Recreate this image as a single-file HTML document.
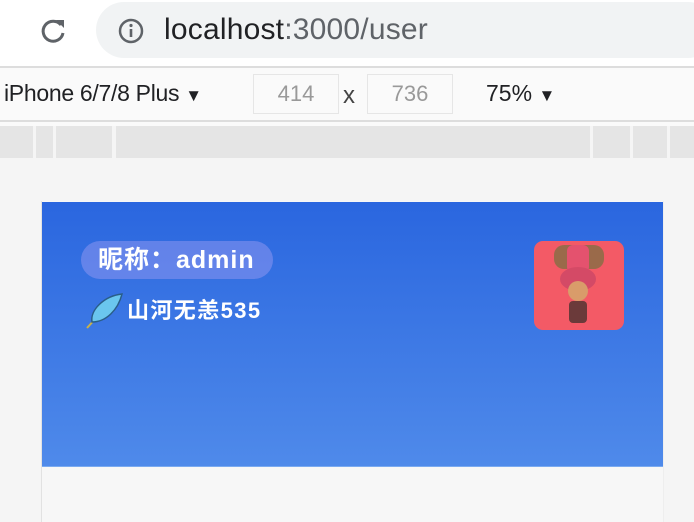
<!DOCTYPE html>
<html><head><meta charset="utf-8"><style>
*{margin:0;padding:0;box-sizing:border-box}
body{width:694px;height:522px;overflow:hidden;background:#f5f5f5;font-family:"Liberation Sans","Noto Sans CJK SC",sans-serif;position:relative}
.abs{position:absolute}
</style></head><body>
<div class="abs" style="left:0;top:0;width:694px;height:66px;background:#fff"></div>
<svg class="abs" style="left:36px;top:14px" width="34" height="34" viewBox="0 0 34 34"><path d="M25 11 A10 10 0 1 0 27 19" fill="none" stroke="#5f6368" stroke-width="3"/><path d="M20 6 L28 6 L28 14 Z" fill="#5f6368"/></svg>
<div class="abs" style="left:96px;top:2px;width:620px;height:56px;background:#f1f3f4;border-radius:28px"></div>
<svg class="abs" style="left:117px;top:17px" width="28" height="28" viewBox="0 0 28 28"><circle cx="14" cy="14" r="11" fill="none" stroke="#5f6368" stroke-width="2.5"/><rect x="12.7" y="12" width="2.6" height="8" fill="#5f6368"/><circle cx="14" cy="8.5" r="1.6" fill="#5f6368"/></svg>
<div class="abs" style="left:164px;top:12px;font-size:30px;letter-spacing:0.2px;color:#202124;line-height:36px">localhost<span style="color:#5f6368">:3000/user</span></div>
<div class="abs" style="left:0;top:66px;width:694px;height:2px;background:#ddd"></div>
<div class="abs" style="left:0;top:68px;width:694px;height:52px;background:#fafafa"></div>
<div class="abs" style="left:4px;top:80px;font-size:23px;letter-spacing:-0.3px;color:#202124">iPhone 6/7/8 Plus <span style="font-size:17px">▼</span></div>
<div class="abs" style="left:253px;top:74px;width:86px;height:40px;border:1px solid #e6e6e6;background:#fafafa;font-size:22px;color:#999;text-align:center;line-height:38px">414</div>
<div class="abs" style="left:343px;top:82px;font-size:24px;color:#444">x</div>
<div class="abs" style="left:367px;top:74px;width:86px;height:40px;border:1px solid #e6e6e6;background:#fafafa;font-size:22px;color:#999;text-align:center;line-height:38px">736</div>
<div class="abs" style="left:486px;top:80px;font-size:23px;color:#202124">75% <span style="font-size:17px">▼</span></div>
<div class="abs" style="left:0;top:120px;width:694px;height:2px;background:#ddd"></div>
<div class="abs" style="left:0;top:122px;width:694px;height:4px;background:#fafafa"></div>
<div class="abs" style="left:0;top:126px;width:694px;height:32px;background:#e5e5e5"></div>
<div class="abs" style="left:33px;top:126px;width:3px;height:32px;background:#f5f5f5"></div>
<div class="abs" style="left:53px;top:126px;width:3px;height:32px;background:#f5f5f5"></div>
<div class="abs" style="left:112px;top:126px;width:4px;height:32px;background:#f5f5f5"></div>
<div class="abs" style="left:590px;top:126px;width:3px;height:32px;background:#f5f5f5"></div>
<div class="abs" style="left:630px;top:126px;width:3px;height:32px;background:#f5f5f5"></div>
<div class="abs" style="left:667px;top:126px;width:3px;height:32px;background:#f5f5f5"></div>
<div class="abs" style="left:41px;top:201px;width:623px;height:321px;background:#f7f7f7;border-left:1px solid #e2e2e2;border-right:1px solid #eee"></div>
<div class="abs" style="left:42px;top:202px;width:621px;height:265px;background:linear-gradient(#2a66df,#4f8aea);border-bottom:1px solid #7aaaf0"></div>
<div class="abs" style="left:81px;top:241px;width:192px;height:38px;border-radius:19px;background:rgba(140,150,240,.55)"></div>
<div class="abs" style="left:98px;top:244px;font-size:25px;font-weight:bold;color:#fff;line-height:32px;letter-spacing:1px">昵称：admin</div>
<svg class="abs" style="left:84px;top:292px" width="40" height="40" viewBox="0 0 40 40"><path d="M3 36 L30 6" stroke="#c9b24a" stroke-width="2"/><path d="M8 30 C6 18 20 4 38 2 C34 18 22 30 8 30Z" fill="#6ac6ee" stroke="#2a5e88" stroke-width="1.5"/></svg>
<div class="abs" style="left:127px;top:297px;font-size:22px;font-weight:bold;color:#fff;line-height:28px;letter-spacing:1.4px">山河无恙535</div>
<div class="abs" style="left:534px;top:241px;width:90px;height:89px;border-radius:9px;background:#f35a66;overflow:hidden">
<div class="abs" style="left:20px;top:4px;width:50px;height:24px;border-radius:10px;background:#9a6a4a"></div>
<div class="abs" style="left:33px;top:4px;width:22px;height:28px;background:#e4526e;border-radius:6px"></div>
<div class="abs" style="left:26px;top:26px;width:36px;height:24px;border-radius:50%;background:#d44a66"></div>
<div class="abs" style="left:34px;top:40px;width:20px;height:20px;border-radius:50%;background:#d99c6a"></div>
<div class="abs" style="left:35px;top:60px;width:18px;height:22px;background:#6b3a3a;border-radius:4px"></div>
</div>
</body></html>
